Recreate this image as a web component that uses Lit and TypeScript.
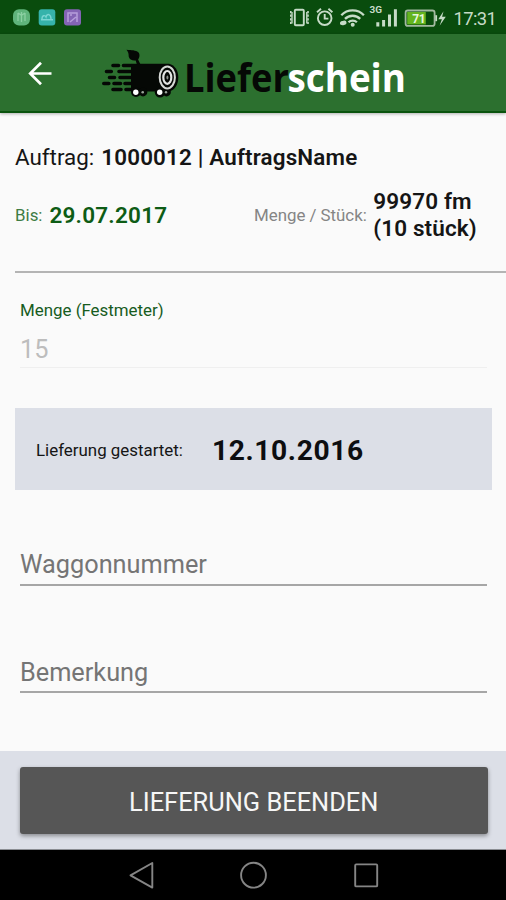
import { LitElement, html, css } from "lit";
import { customElement } from "lit/decorators.js";

@customElement("status-bar")
class StatusBar extends LitElement {
  static styles = css`
    :host { display: flex; align-items: center; justify-content: space-between; height: 34px; background: #094c0d; }
    svg { display: block; }
    .clock { font: 400 18.4px Roboto, sans-serif; fill: #c6dbc7; }
    .net { font: 700 8.5px Roboto, sans-serif; fill: #c6dbc7; }
    .charge { font: 700 12px Roboto, sans-serif; fill: #e6f7dc; }
  `;
  render() {
    const c = "#c6dbc7";
    return html`
      <svg width="100" height="34" viewBox="0 0 100 34" fill="none">
        <rect x="13" y="9.3" width="17" height="16.2" rx="6" fill="#5fb47b" />
        <path d="M18 13v8M21.5 12v10M25 13v8M18 13l3 2M25 13l-3 2" stroke="#8bd0a2" stroke-width="1.3" />
        <rect x="38.7" y="9.3" width="16.6" height="16.2" rx="3" fill="#36b3ab" />
        <path d="M41 19.8h12M42 19c0-4 3-4 4-2 1-4 5-3 5 2" stroke="#7bd6d2" stroke-width="1.4" />
        <rect x="64" y="9.3" width="17" height="16.2" rx="3" fill="#8464b5" />
        <path d="M68 22v-9h9v9M70 22l6-5M70 15h2" stroke="#b69edb" stroke-width="1.5" />
      </svg>
      <svg width="220" height="34" viewBox="286 0 220 34" fill="none">
        <rect x="294.8" y="9.8" width="9" height="15.4" rx="1" stroke=${c} stroke-width="1.9" />
        <path d="M292 12v11.5M306.8 12v11.5" stroke=${c} stroke-width="1.4" />
        <path d="M290.8 11v13M308 11v13" stroke=${c} stroke-width="1.6" stroke-dasharray="2.2 1.4" />
        <circle cx="324.7" cy="18.2" r="6.8" stroke=${c} stroke-width="1.9" />
        <path d="M324.7 14v4.6h3.7M317 12.2l4-3.4M332.4 12.2l-4-3.4" stroke=${c} stroke-width="1.9" />
        <path d="M341.3 15.2a15.6 15.6 0 0 1 22.6 0M345 18.9a10.7 10.7 0 0 1 15.2 0M348.5 22.3a6 6 0 0 1 8.4 0" stroke=${c} stroke-width="2.3" />
        <circle cx="352.7" cy="24.8" r="2" fill=${c} />
        <path d="M340 23.8a2.2 2.2 0 0 1 2.6-2.7c1.6-1.5 4-.4 3.8 1.2 1.2 2.8-6 4.2-6.4 1.5z" fill=${c} />
        <text class="net" x="369.6" y="13" textLength="12.5" lengthAdjust="spacingAndGlyphs">3G</text>
        <path d="M377.8 26.5v-4.2M383.6 26.5v-6.5M389.5 26.5V14.6M395.4 26.5V9.2" stroke=${c} stroke-width="3" />
        <rect x="405.6" y="10.5" width="29" height="15.4" rx="2.2" stroke="#a3b9a1" stroke-width="1.8" />
        <rect x="407.2" y="12" width="18.6" height="12.4" fill="#64b41f" />
        <path d="M436.2 15.2v6" stroke=${c} stroke-width="1.8" />
        <text class="charge" x="412.2" y="22.6" textLength="13.4">71</text>
        <path d="M443.5 11.2l-5.2 8h3.6l-2.3 6.5 6.2-9h-3.7z" fill=${c} />
        <text class="clock" x="453.4" y="24.6" textLength="43.5">17:31</text>
      </svg>
    `;
  }
}

@customElement("app-header")
class AppHeader extends LitElement {
  static styles = css`
    :host { display: flex; align-items: flex-start; box-sizing: border-box; height: 79px; background: #2c702f;
      border-bottom: 2px solid #0a540d; box-shadow: 0 1px 3px rgba(0,0,0,.3); z-index: 1; }
    svg { display: block; flex: none; }
    .back { margin: 27px 0 0 27px; }
    .mark { margin: 14px 0 0 48px; }
    .word { margin-left: 5px; height: 77px; overflow: visible; }
    .name { font: 700 38.5px "Open Sans", sans-serif; }
    .first { fill: #050805; }
    .second { fill: #fff; }
  `;
  render() {
    return html`
      <svg class="back" width="26" height="26" viewBox="27 61 26 26" fill="none" stroke="#fff" stroke-width="2.7">
        <path d="M51.5 73.5H30.4M41 62.7L30.2 73.5 41 84.3" />
      </svg>
      <svg class="mark" width="80" height="52" viewBox="101 48 80 52" fill="none">
        <g stroke="#050805" stroke-width="3.6" stroke-linecap="round">
          <path d="M113 65.5h5.5M123.5 65.5h7M106.5 71.5h4.8M119 71.5h12M109.5 77.5h5M120 77.5h11M103.8 83.5h5M114 83.5h6.5M125 83.5h6M113 89.5h8M126 89.5h6" />
        </g>
        <path d="M131 63.8H169C175 65 178.3 71 178.3 77.5S175 90.3 169 91.5H131z" fill="#050805" />
        <path d="M126.5 49.7c5 .6 9.3.2 11.8 2.6 2 2 1.2 5.5-.2 7.2l2.4 5h-3.6l-1.2-4c-3 .5-6.5-.7-7-4 0-2.5-.2-4.5-2.2-6.8z" fill="#050805" />
        <circle cx="136" cy="92" r="5" fill="#050805" /><circle cx="143" cy="92" r="4.4" fill="#050805" />
        <circle cx="160" cy="92.3" r="5.2" fill="#050805" /><circle cx="166.5" cy="92" r="4.4" fill="#050805" />
        <circle cx="135.8" cy="92.2" r="2.7" fill="#fff" /><circle cx="142.7" cy="92.3" r="1.3" fill="#9aa39a" />
        <circle cx="159.7" cy="92.2" r="2.7" fill="#fff" /><circle cx="166" cy="92.3" r="1.2" fill="#9aa39a" />
        <ellipse cx="167.3" cy="77.4" rx="7.6" ry="11" stroke="#d5d8d5" stroke-width="2" />
        <ellipse cx="167.3" cy="77.4" rx="4" ry="6.4" stroke="#e2e4e2" stroke-width="2.2" />
        <ellipse cx="167.4" cy="77.4" rx="1" ry="2" fill="#8c918c" />
      </svg>
      <svg class="word" width="224" height="77" viewBox="186 34 224 77">
        <text class="name first" x="184" y="91.8" textLength="105" lengthAdjust="spacingAndGlyphs">Liefer</text>
        <text class="name second" x="287.6" y="91.8" textLength="118.4" lengthAdjust="spacingAndGlyphs">schein</text>
      </svg>
    `;
  }
}

@customElement("nav-bar")
class NavBar extends LitElement {
  static styles = css`
    :host { display: flex; justify-content: center; height: 50px; background: #000; }
    svg { display: block; }
  `;
  render() {
    return html`
      <svg width="506" height="50" viewBox="0 850 506 50" fill="none" stroke="#858585" stroke-width="1.9" stroke-linejoin="round">
        <path d="M130.5 875.3L152.3 863v24.6z" />
        <circle cx="253.5" cy="875.2" r="12.4" />
        <rect x="355.2" y="864.4" width="22" height="22" rx="1" />
      </svg>
    `;
  }
}

@customElement("app-root")
class AppRoot extends LitElement {
  static styles = css`
    :host { display: flex; flex-direction: column; height: 900px; background: #fafafa;
      font-family: Roboto, sans-serif; color: #151515; overflow: hidden; }
    main { flex: 1; display: flex; flex-direction: column; min-height: 0; }
    span { white-space: nowrap; }
    .order { margin: 29px 0 0 15px; height: 30px; line-height: 30px; font-size: 22.4px; display: flex; gap: 7px; }
    .order b { letter-spacing: .17px; }
    b { font-weight: 600; }
    .facts { margin-left: 15px; height: 99px; border-bottom: 2px solid #b4b4b4; display: flex; }
    .cell { display: flex; align-items: center; height: 86px; }
    .due { width: 239px; gap: 7px; color: #0d5c15; }
    .due b { font-size: 22.5px; letter-spacing: .22px; }
    .small { font-size: 16.9px; }
    .due .small { color: #3e7c44; }
    .amount { gap: 6.5px; }
    .amount .small { color: #858585; letter-spacing: -.03px; }
    .amount b { font-size: 22.5px; line-height: 26.7px; letter-spacing: .13px; }
    .quantity { margin: 27px 19px 0 20px; height: 67px; border-bottom: 1px solid #efefef; }
    .quantity label { display: block; height: 20px; line-height: 20px; font-size: 16.9px; color: #175c1e; }
    .quantity .value { display: block; height: 30px; line-height: 30px; margin-top: 15px; font-size: 25.3px; color: #bdbdbd; }
    .started { margin: 40px 14px 0 15px; height: 82px; box-sizing: border-box; background: #dcdfe7; display: flex; align-items: center; gap: 28px; padding: 2px 0 0 21px; }
    .started .small { width: 148px; }
    .started b { font-size: 28.2px; font-weight: 700; letter-spacing: .6px; color: #0d0e10; }
    .field { margin: 0 19px 0 20px; border-bottom: 2px solid #a6a6a6; box-sizing: border-box;
      font-size: 25.3px; color: #757575; line-height: 30px; height: 36px; }
    .wagon { margin-top: 60px; }
    .remark { margin-top: 71px; line-height: 32px; }
    footer { height: 99px; box-sizing: border-box; padding: 16px 18.5px 16px 20px; background: #dcdfe7; border-bottom: 1px solid #8b8e93; }
    button { display: block; width: 100%; height: 67px; border: 0; padding: 3px 0 0 0; border-radius: 3px; background: #565656; color: #f6f6f6;
      font: 400 25.4px Roboto, sans-serif; box-shadow: 0 2px 4px rgba(0,0,0,.38); }
  `;
  render() {
    return html`
      <status-bar></status-bar>
      <app-header></app-header>
      <main>
        <div class="order"><span>Auftrag:</span><b>1000012 | AuftragsName</b></div>
        <div class="facts">
          <div class="cell due"><span class="small">Bis:</span><b>29.07.2017</b></div>
          <div class="cell amount"><span class="small">Menge / Stück:</span><b>99970 fm<br />(10 stück)</b></div>
        </div>
        <div class="quantity"><label>Menge (Festmeter)</label><span class="value">15</span></div>
        <div class="started"><span class="small">Lieferung gestartet:</span><b>12.10.2016</b></div>
        <div class="field wagon">Waggonnummer</div>
        <div class="field remark">Bemerkung</div>
      </main>
      <footer><button>LIEFERUNG BEENDEN</button></footer>
      <nav-bar></nav-bar>
    `;
  }
}
